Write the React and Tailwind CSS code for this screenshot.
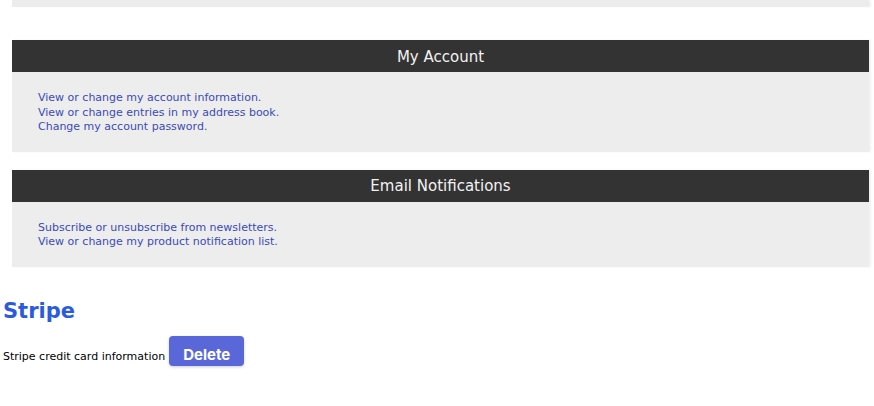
import React from 'react';

const sections = [
  {
    title: 'My Account',
    links: [
      'View or change my account information.',
      'View or change entries in my address book.',
      'Change my account password.',
    ],
  },
  {
    title: 'Email Notifications',
    links: [
      'Subscribe or unsubscribe from newsletters.',
      'View or change my product notification list.',
    ],
  },
];

function Section({ title, links }) {
  return (
    <div className="mx-[12px] mb-[18px] w-[857px] shadow-[2px_0_2px_rgba(0,0,0,0.06)]">
      <div className="h-8 pt-[2px] bg-[#333333] flex items-center justify-center text-[15px] text-[#f2f2f2] font-['DejaVu_Sans',Verdana,sans-serif]">
        {title}
      </div>
      <div className="bg-[#ededed] pl-[26px] pt-[19px] pb-[17px] flex flex-col">
        {links.map(l => (
          <a key={l} href="#" className="text-[11px] leading-[14.5px] text-[#3b4bb5] font-['DejaVu_Sans',Verdana,sans-serif]">
            {l}
          </a>
        ))}
      </div>
    </div>
  );
}

export default function App() {
  return (
    <div className="w-[874px] h-[406px] bg-white overflow-hidden font-['DejaVu_Sans',Verdana,sans-serif]">
      <div className="mx-[12px] w-[857px] h-[7px] bg-[#ececec] shadow-[2px_0_2px_rgba(0,0,0,0.06)]" />
      <div className="h-[33px]" />
      {sections.map(s => <Section key={s.title} {...s} />)}
      <div className="px-[3px] pt-[12px]">
        <h2 className="text-[21px] leading-[28px] font-bold text-[#2b5bdc]">Stripe</h2>
        <div className="mt-[11px] flex items-baseline gap-[4px]">
          <span className="text-[11px] text-black">Stripe credit card information</span>
          <button className="w-[75px] h-[30px] pt-[8px] leading-[20px] rounded-[4px] bg-[#5a67d8] text-white text-[15px] font-bold font-['Inter',sans-serif] shadow-[0_1px_3px_rgba(0,0,0,0.2)]">
            Delete
          </button>
        </div>
      </div>
    </div>
  );
}
